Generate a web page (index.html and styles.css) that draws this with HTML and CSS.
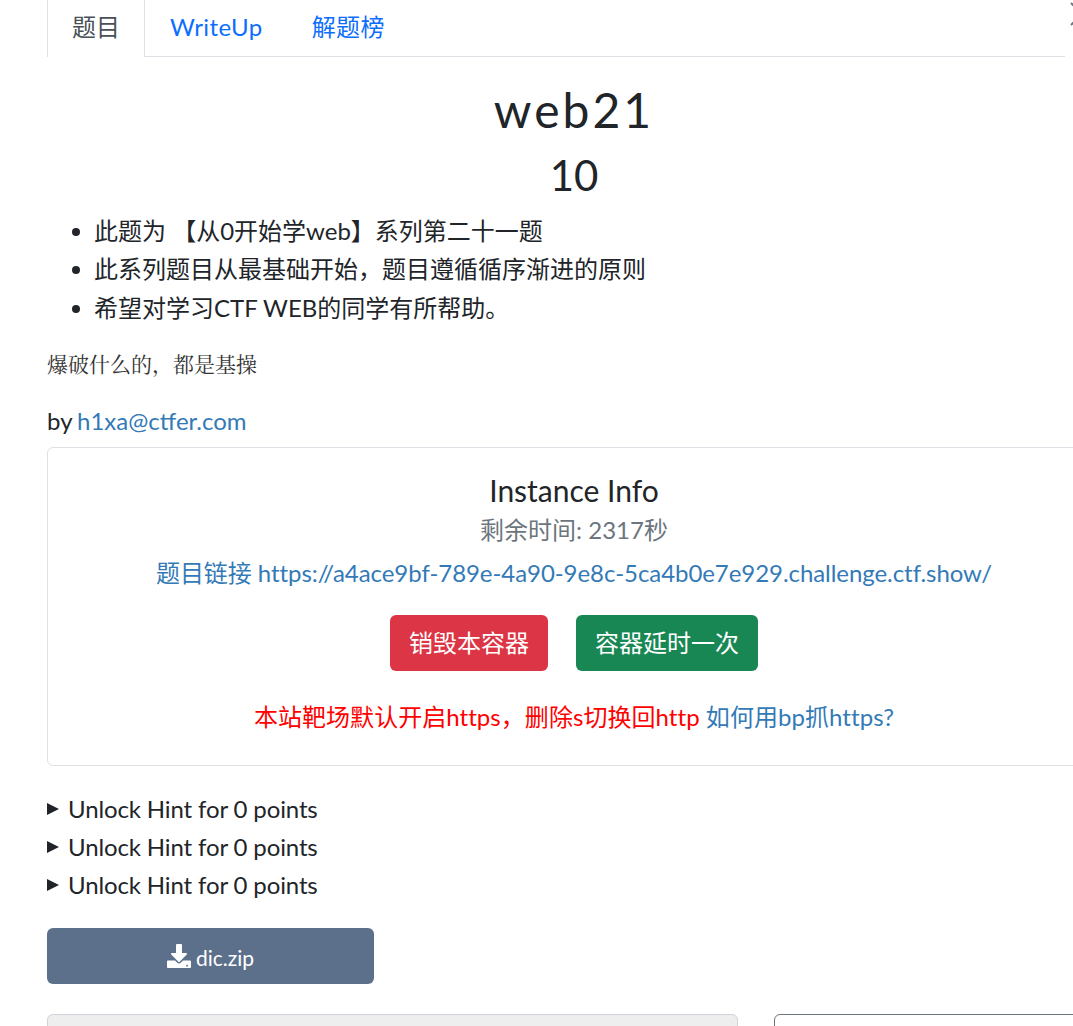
FILE: index.html
```html
<!DOCTYPE html>
<html lang="zh-CN">
<head>
    <meta charset="UTF-8">
    <meta name="viewport" content="width=device-width, initial-scale=1.0">
    <title>web21</title>
    <link rel="stylesheet" href="styles.css">
</head>
<body>
    <svg class="close-mark" viewBox="0 0 24 24" aria-hidden="true">
        <path d="M1 1l22 22M1 23L23 1"/>
    </svg>
    <div class="modal-body">
        <ul class="tabs">
            <li class="tab active">题目</li>
            <li class="tab"><a href="#">WriteUp</a></li>
            <li class="tab"><a href="#">解题榜</a></li>
        </ul>

        <div class="challenge">
            <h3 class="challenge-name">web21</h3>
            <h4 class="challenge-value">10</h4>

            <ul class="desc-list">
                <li>此题为 【从0开始学web】系列第二十一题</li>
                <li>此系列题目从最基础开始，题目遵循循序渐进的原则</li>
                <li>希望对学习CTF WEB的同学有所帮助。</li>
            </ul>
            <p class="desc-note">爆破什么的，都是基操</p>
            <p class="author">by <a href="#">h1xa@ctfer.com</a></p>

            <div class="instance">
                <h5 class="instance-title">Instance Info</h5>
                <div class="instance-time">剩余时间: 2317秒</div>
                <div class="instance-link"><a href="#">题目链接 https://a4ace9bf-789e-4a90-9e8c-5ca4b0e7e929.challenge.ctf.show/</a></div>
                <div class="instance-actions">
                    <button class="btn btn-red">销毁本容器</button>
                    <button class="btn btn-green">容器延时一次</button>
                </div>
                <div class="instance-note"><span class="red">本站靶场默认开启https，删除s切换回http</span> <a href="#">如何用bp抓https?</a></div>
            </div>

            <details class="hint"><summary>Unlock Hint for 0 points</summary></details>
            <details class="hint"><summary>Unlock Hint for 0 points</summary></details>
            <details class="hint"><summary>Unlock Hint for 0 points</summary></details>

            <div class="files">
                <a class="file-btn" href="#">
                    <svg class="file-icon" viewBox="0 0 512 512" aria-hidden="true">
                        <path d="M216 0h80c13.300 0 24 10.700 24 24v168h87.700c17.800 0 26.700 21.500 14.100 34.100L269.700 378.300c-7.500 7.500-19.800 7.500-27.300 0L90.100 226.100c-12.600-12.600-3.700-34.100 14.100-34.100H192V24c0-13.300 10.700-24 24-24zm296 376v112c0 13.300-10.700 24-24 24H24c-13.300 0-24-10.700-24-24V376c0-13.300 10.700-24 24-24h146.700l49 49c20.100 20.100 52.500 20.100 72.600 0l49-49H488c13.300 0 24 10.700 24 24zm-64 88c0-11-9-20-20-20s-20 9-20 20 9 20 20 20 20-9 20-20z"/>
                    </svg>
                    <span class="file-name">dic.zip</span>
                </a>
            </div>

            <div class="submit-row">
                <div class="flag-input"></div>
                <div class="flag-submit"></div>
            </div>
        </div>
    </div>
</body>
</html>
```

FILE: styles.css
```css
html, body {
    height: 1026px;
    overflow: hidden;
}
body {
    margin: 0;
    background: #fff;
    color: #212529;
    font-family: Lato, "Noto Sans CJK SC", sans-serif;
    font-size: 24px;
    line-height: 1.6;
}
a {
    color: #337ab7;
    text-decoration: none;
}
.close-mark {
    position: absolute;
    top: 2px;
    left: 1070px;
    width: 24px;
    height: 24px;
    fill: none;
    stroke: #6c757d;
    stroke-width: 2;
}
.modal-body {
    width: 1018px;
    padding-left: 47px;
}
.tabs {
    display: flex;
    list-style: none;
    margin: 0;
    padding: 0;
    height: 56px;
    border-bottom: 1px solid #dee2e6;
}
.tab {
    padding: 8px 24px 0;
    margin-right: 1px;
}
.tab a {
    color: #0d6efd;
    letter-spacing: 0.4px;
}
.tab.active {
    color: #495057;
    border-left: 1px solid #dee2e6;
    border-right: 1px solid #dee2e6;
    background: #fff;
    height: 57px;
    box-sizing: border-box;
}
.challenge {
    width: 1054px;
}
.challenge-name {
    margin: 24px 0 0;
    text-align: center;
    font-size: 48px;
    font-weight: 400;
    line-height: 1.2;
    letter-spacing: 3px;
}
.challenge-value {
    margin: 11px 0 0;
    text-align: center;
    font-size: 42px;
    font-weight: 400;
    line-height: 1.2;
}
.desc-list {
    margin: 12px 0 0;
    padding-left: 48px;
}
.desc-list li {
    text-indent: -1px;
}
.desc-note {
    margin: 20px 0 0;
    font-family: "Noto Serif CJK SC", "Liberation Serif", serif;
    font-size: 21px;
    color: #333;
}
.author {
    margin: 21px 0 0;
    word-spacing: -1px;
}
.instance {
    margin-top: 7px;
    height: 319px;
    box-sizing: border-box;
    border: 1px solid #dee2e6;
    border-radius: 6px;
    padding-top: 18px;
    text-align: center;
}
.instance-title {
    margin: 0;
    font-size: 30px;
    font-weight: 400;
    line-height: 1.6;
}
.instance-time {
    color: #6c757d;
    margin-top: -3px;
}
.instance-link {
    margin-top: 4px;
    letter-spacing: -0.06px;
}
.instance-actions {
    display: flex;
    justify-content: center;
    gap: 28px;
    margin-top: 23px;
}
.btn {
    height: 56px;
    padding: 0 19px;
    border: none;
    border-radius: 6px;
    color: #fff;
    font: inherit;
}
.btn-red {
    background: #dc3545;
}
.btn-green {
    background: #198754;
}
.instance-note {
    margin-top: 27px;
    letter-spacing: 0.05px;
}
.red {
    color: #f00;
}
.hint {
    line-height: 38px;
}
.instance + .hint {
    margin-top: 24px;
}
.hint summary {
    display: flex;
    align-items: center;
    gap: 9px;
    letter-spacing: -0.13px;
}
.hint summary::before {
    content: "";
    border-left: 12px solid #212529;
    border-top: 6px solid transparent;
    border-bottom: 6px solid transparent;
}
.files {
    margin-top: 24px;
}
.file-btn {
    display: flex;
    align-items: center;
    justify-content: center;
    gap: 5px;
    width: 327px;
    height: 56px;
    border-radius: 6px;
    background: #5c708c;
    color: #fff;
    font-size: 21px;
}
.file-name {
    margin-top: 4px;
}
.file-icon {
    width: 24px;
    height: 24px;
    fill: #fff;
}
.submit-row {
    display: grid;
    grid-template-columns: 691px 1fr;
    column-gap: 36px;
    margin-top: 30px;
}
.flag-input {
    height: 60px;
    border: 1px solid #ced4da;
    border-radius: 6px;
    background: #eee;
}
.flag-submit {
    height: 60px;
    border: 1px solid #6c757d;
    border-radius: 6px;
}
```
